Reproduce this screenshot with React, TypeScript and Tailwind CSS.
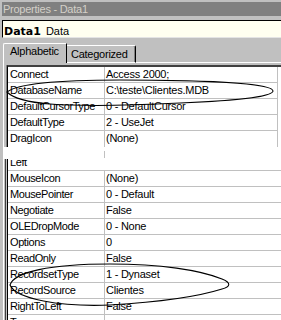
import React from "react";

const upperRows: [string, string][] = [
  ["Connect", "Access 2000;"],
  ["DatabaseName", "C:\\teste\\Clientes.MDB"],
  ["DefaultCursorType", "0 - DefaultCursor"],
  ["DefaultType", "2 - UseJet"],
  ["DragIcon", "(None)"],
];

const lowerRows: [string, string][] = [
  ["MouseIcon", "(None)"],
  ["MousePointer", "0 - Default"],
  ["Negotiate", "False"],
  ["OLEDropMode", "0 - None"],
  ["Options", "0"],
  ["ReadOnly", "False"],
  ["RecordsetType", "1 - Dynaset"],
  ["RecordSource", "Clientes"],
  ["RightToLeft", "False"],
  ["Tag", ""],
];

const PropRow = ({ name, value, last }: { name: string; value: string; last?: boolean }) => (
  <div className={`flex h-[16px] ${last ? "" : "border-b border-[#c0c0c0]"}`}>
    <div className="w-[97px] shrink-0 border-r border-[#c0c0c0] pl-[2px] leading-[15px] whitespace-nowrap tracking-[-0.4px]">
      {name}
    </div>
    <div className="flex-1 pl-[1px] leading-[15px] whitespace-nowrap">{value}</div>
  </div>
);

export default function App() {
  return (
    <div className="relative w-[281px] h-[320px] overflow-hidden bg-[#c0c0c0] text-[11px] tracking-[-0.25px] text-black font-['Liberation_Sans',Arial,sans-serif]">
      {/* Title bar */}
      <div className="h-[2px]" />
      <div className="ml-[2px] h-[14px] bg-[#808080] pl-[1px] leading-[14px] text-[#d4d0c8]">
        Properties - Data1
      </div>
      <div className="h-[4px]" />

      {/* Object box */}
      <div className="ml-[2px] h-[18px] border-t border-l border-black border-b border-b-[#e4e4e4] bg-[#fffff0] pl-[1px] pt-[3px] leading-[14px] whitespace-nowrap tracking-normal">
        <span className="font-bold font-['DejaVu_Sans',sans-serif]">Data1</span>
        <span className="ml-[5px]">Data</span>
      </div>
      <div className="h-[1px]" />

      {/* Tabs */}
      <div className="flex h-[24px] items-end pl-[3px]">
        <div className="w-[64px] h-[20px] rounded-tl-[2px] border-t border-l border-white border-r border-r-black pl-[6px] leading-[15px]">
          Alphabetic
        </div>
        <div className="w-[69px] h-[18px] rounded-tr-[2px] border-t border-t-white border-b border-b-white border-r border-r-black pl-[4px] leading-[16px] shadow-[inset_-1px_0_0_#808080]">
          Categorized
        </div>
        <div className="flex-1 h-[1px] bg-white" />
      </div>
      <div className="ml-[3px] h-[2px] border-l border-white" />

      {/* Upper grid */}
      <div className="ml-[3px] flex border-l border-white pl-[2px]">
        <div className="flex-1 border-l border-[#808080]">
          <div className="border-l border-t-2 border-t-[#404040] border-l-black bg-white">
            <div className="mr-[3px] border-r border-[#c0c0c0]">
              {upperRows.map(([n, v], i) => (
                <PropRow key={n} name={n} value={v} last={i === upperRows.length - 1} />
              ))}
            </div>
          </div>
        </div>
      </div>

      {/* Blank band over the cut-out part */}
      <div className="ml-[3px] flex h-[12px] bg-white">
        <div className="w-[101px]" />
        <div className="mt-[4px] h-[7px] w-[1px] bg-[#c0c0c0]" />
      </div>

      {/* Lower grid */}
      <div className="ml-[3px] border-l border-white pl-[1px]">
        <div className="border-l border-[#404040] pl-[1px]">
          <div className="border-l border-black bg-white">
            <div className="h-[12px] border-b border-[#c0c0c0] flex">
              <div className="w-[97px] shrink-0 pl-[2px] overflow-hidden">
                <div className="mt-[1px] h-[10px] overflow-hidden">
                  <div className="-mt-[5px] leading-[15px] tracking-[-0.4px]">Left</div>
                </div>
              </div>
            </div>
            {lowerRows.map(([n, v]) => (
              <PropRow key={n} name={n} value={v} />
            ))}
          </div>
        </div>
      </div>

      {/* Hand-drawn ellipses */}
      <svg className="pointer-events-none absolute left-0 top-0" width="281" height="320" viewBox="0 0 281 320">
        <path
          d="M7 92 C 16 85, 50 80, 120 80 C 200 80, 273 83, 273 91 C 273 97, 230 101, 180 103 C 140 105, 90 107, 50 104 C 25 102, 12 97, 7 92 Z"
          fill="none"
          stroke="#000"
          strokeWidth="1.1"
        />
        <path
          d="M10 285 C 14 272, 50 264, 110 264 C 160 264, 200 270, 222 279 C 232 283, 230 287, 222 289 C 200 296, 160 302, 110 305 C 60 307, 16 299, 10 285 Z"
          fill="none"
          stroke="#000"
          strokeWidth="1.1"
        />
      </svg>
    </div>
  );
}
